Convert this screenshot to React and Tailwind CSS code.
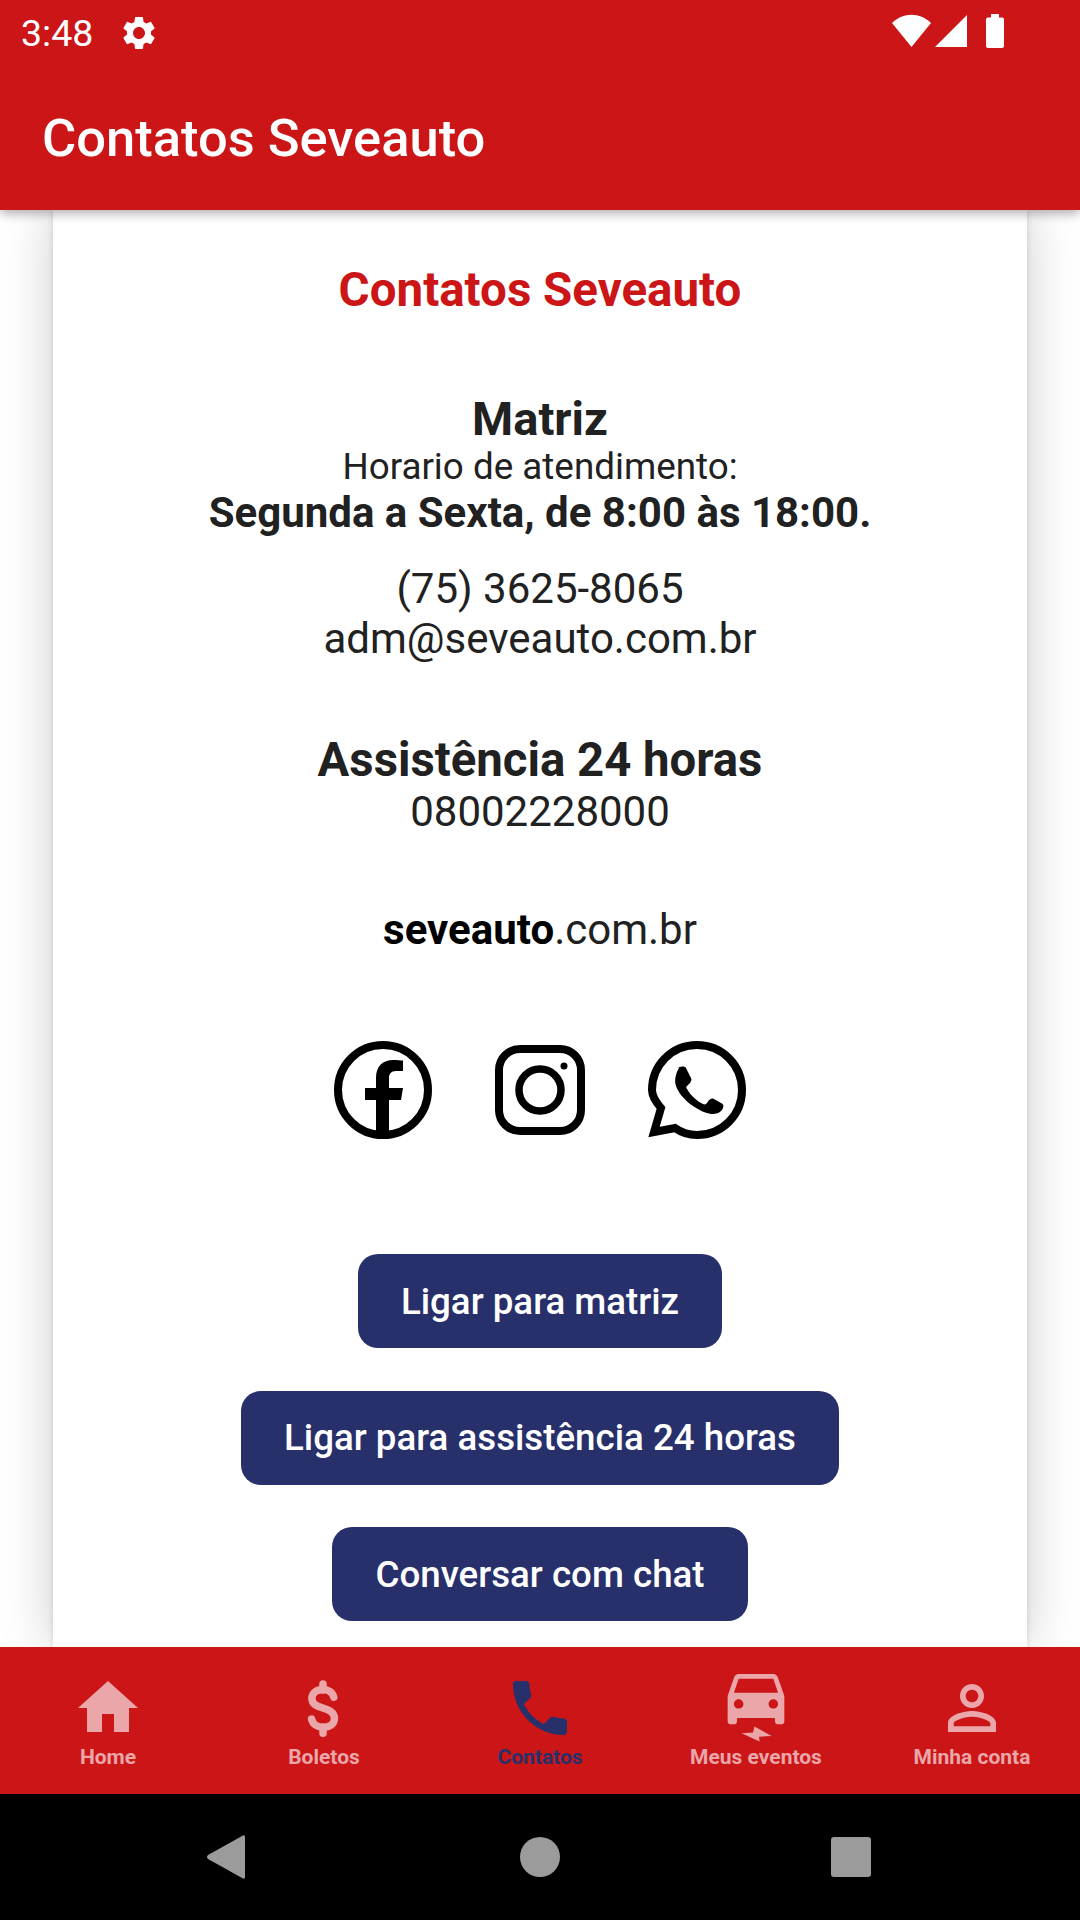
import React from 'react';

const font = { fontFamily: 'Roboto, sans-serif' };

const Home = () => (
  <svg viewBox="0 0 24 24" className="w-[72px] h-[72px]" fill="currentColor">
    <path d="M10 20v-6h4v6h5v-8h3L12 3 2 12h3v8z" />
  </svg>
);

const Dollar = () => (
  <svg viewBox="0 0 24 24" className="w-[72px] h-[72px] -ml-[3px]" fill="none" stroke="currentColor" strokeWidth="2.500" strokeLinecap="round">
    <path d="M12 4v2M12 18.400v2" />
    <path d="M15.600 8.400c-.4-1.600-1.800-2.600-3.600-2.600-2.100 0-3.700 1.200-3.700 3 0 4.100 7.500 2.300 7.500 6.700 0 1.800-1.600 2.900-3.800 2.900-2 0-3.400-1-3.800-2.700" />
  </svg>
);

const Phone = () => (
  <svg viewBox="0 0 24 24" className="w-[72px] h-[72px]" fill="currentColor">
    <path d="M6.62 10.79c1.44 2.83 3.76 5.14 6.59 6.59l2.2-2.2c.27-.27.67-.36 1.02-.24 1.12.37 2.33.57 3.57.57.55 0 1 .45 1 1V20c0 .55-.45 1-1 1-9.39 0-17-7.61-17-17 0-.55.45-1 1-1h3.5c.55 0 1 .45 1 1 0 1.25.2 2.45.57 3.57.11.35.03.74-.25 1.02l-2.2 2.2z" />
  </svg>
);

const Car = () => (
  <svg viewBox="0 0 24 24" className="w-[72px] h-[72px]" fill="currentColor">
    <g transform="translate(-0.6 -4.6) scale(1.05)">
      <path d="M18.92 6.01C18.72 5.42 18.16 5 17.5 5h-11c-.66 0-1.21.42-1.42 1.01L3 12v8c0 .55.45 1 1 1h1c.55 0 1-.45 1-1v-1h12v1c0 .55.45 1 1 1h1c.55 0 1-.45 1-1v-8l-2.08-5.99zM6.5 16c-.83 0-1.5-.67-1.5-1.5S5.67 13 6.5 13s1.5.67 1.5 1.5S7.33 16 6.5 16zm11 0c-.83 0-1.5-.67-1.5-1.5s.67-1.5 1.5-1.5 1.5.67 1.5 1.5-.67 1.5-1.5 1.5zM5 11l1.500-4.500h11L19 11H5z" />
    </g>
    <polygon points="11.5,18.2 11,20.2 7.2,20.4 13.2,23.2 13,21.6 17.2,21.3" />
  </svg>
);

const Person = () => (
  <svg viewBox="0 0 24 24" className="w-[72px] h-[72px]" fill="currentColor">
    <path d="M12 5.9c1.16 0 2.1.94 2.1 2.1s-.94 2.1-2.1 2.1S9.9 9.16 9.9 8s.94-2.1 2.1-2.1m0 9c2.97 0 6.1 1.46 6.1 2.1v1.1H5.9V17c0-.64 3.13-2.1 6.1-2.1M12 4C9.79 4 8 5.79 8 8s1.79 4 4 4 4-1.79 4-4-1.79-4-4-4zm0 9c-2.67 0-8 1.34-8 4v3h16v-3c0-2.66-5.33-4-8-4z" />
  </svg>
);

const Gear = () => (
  <svg viewBox="0 0 24 24" className="w-[40px] h-[40px]" fill="#fff">
    <path d="M19.14 12.94c.04-.3.06-.61.06-.94 0-.32-.02-.64-.07-.94l2.03-1.58c.18-.14.23-.41.12-.61l-1.92-3.32c-.12-.22-.37-.29-.59-.22l-2.39.96c-.5-.38-1.03-.7-1.62-.94l-.36-2.54c-.04-.24-.24-.41-.48-.41h-3.84c-.24 0-.43.17-.47.41l-.36 2.54c-.59.24-1.13.57-1.62.94l-2.39-.96c-.22-.08-.47 0-.59.22L2.74 8.87c-.12.21-.08.47.12.61l2.03 1.58c-.05.3-.09.63-.09.94s.02.64.07.94l-2.03 1.58c-.18.14-.23.41-.12.61l1.92 3.32c.12.22.37.29.59.22l2.39-.96c.5.38 1.03.7 1.62.94l.36 2.54c.05.24.24.41.48.41h3.84c.24 0 .44-.17.47-.41l.36-2.54c.59-.24 1.13-.56 1.62-.94l2.39.96c.22.08.47 0 .59-.22l1.92-3.32c.12-.22.07-.47-.12-.61l-2.01-1.58zM12 15.6c-1.98 0-3.6-1.62-3.6-3.6s1.62-3.6 3.6-3.6 3.6 1.62 3.6 3.6-1.62 3.6-3.6 3.6z" />
  </svg>
);

const StatusIcons = () => (
  <svg viewBox="0 0 114 36" className="w-[114px] h-[36px]" fill="#fff">
    <path d="M0 9C11-2 28-2 39 9L19.500 33z" />
    <polygon points="43,33 75,33 75,1" />
    <path d="M94 5.500a2 2 0 0 1 2-2h3V0h8v3.500h3a2 2 0 0 1 2 2V32a2 2 0 0 1-2 2H96a2 2 0 0 1-2-2z" />
  </svg>
);

const Facebook = () => (
  <svg viewBox="0 0 98 98" className="w-[98px] h-[98px]">
    <circle cx="49" cy="49" r="45" fill="none" stroke="#000" strokeWidth="8" />
    <path d="M42 96V59H31V47h11V37c0-12 7-18 17-18 4 0 8 .3 10 .6V30h-7c-5 0-7 3-7 7v10h14l-2 12H55v37z" fill="#000" />
  </svg>
);

const Instagram = () => (
  <svg viewBox="0 0 90 90" className="w-[90px] h-[90px]" fill="none" stroke="#000">
    <rect x="4" y="4" width="82" height="82" rx="21" strokeWidth="8" />
    <circle cx="45" cy="45" r="21" strokeWidth="7.500" />
    <circle cx="69" cy="21" r="3.500" fill="#000" stroke="none" />
  </svg>
);

const Whatsapp = () => (
  <svg viewBox="0 0 98 98" className="w-[98px] h-[98px]">
    <path d="M6 91l7-24C7 60 4 55 4 49 4 24 24 4 49 4s45 20 45 45-20 45-45 45c-7 0-15-2-22-7z" fill="none" stroke="#000" strokeWidth="8" strokeLinejoin="miter" />
    <path d="M30 27c3-2 7-2 8 0l5 10c1 2 0 3-1 5l-3 3c-1 1-1 2 0 3 4 7 10 12 16 15 2 1 3 0 4-1l2-3c2-1 3-2 5-1l7 4c2 1 3 2 2 5-1 3-5 6-10 6-5 0-11-2-20-8-9-6-15-14-17-20-2-6 0-13 3-18z" fill="#000" />
  </svg>
);

const tabs = [
  { label: 'Home', Icon: Home },
  { label: 'Boletos', Icon: Dollar },
  { label: 'Contatos', Icon: Phone, active: true },
  { label: 'Meus eventos', Icon: Car },
  { label: 'Minha conta', Icon: Person },
];

const buttons = ['Ligar para matriz', 'Ligar para assistência 24 horas', 'Conversar com chat'];

const App = () => {
  return (
    <div className="w-[1080px] h-[1920px] flex flex-col overflow-hidden bg-white" style={font}>
      {/* Header */}
      <header className="relative z-10 h-[210px] shrink-0 bg-[#cb1517] shadow-[0_4px_10px_rgba(0,0,0,0.3)] text-white">
        <div className="h-[63px] pl-[21px] pr-[74px] pt-[13px] flex items-start justify-between">
          <div className="flex items-center gap-[26px]">
            <span className="text-[37.5px] leading-[40px]">3:48</span>
            <Gear />
          </div>
          <div className="pt-px">
            <StatusIcons />
          </div>
        </div>
        <h1 className="pl-[42px] pt-[52px] text-[52.5px] leading-[46px] font-medium">Contatos Seveauto</h1>
      </header>

      {/* Card */}
      <main className="flex-1 min-h-0 px-[53px]">
        <div className="h-full bg-white shadow-[0_0_6px_rgba(0,0,0,0.12),0_0_50px_rgba(0,0,0,0.2)] flex flex-col items-center text-[#212121] pt-[55px]">
          <h2 className="text-[47.5px] leading-[50px] font-bold text-[#cb1517]">Contatos Seveauto</h2>

          <h3 className="mt-[76px] text-[47px] leading-[56px] font-bold">Matriz</h3>
          <p className="text-[36.8px] leading-[40px]">Horario de atendimento:</p>
          <p className="mt-[3px] text-[42px] leading-[46px] font-bold">Segunda a Sexta, de 8:00 às 18:00.</p>

          <p className="mt-[28px] text-[42px] leading-[50px]">(75) 3625-8065</p>
          <p className="text-[42px] leading-[50px]">adm@seveauto.com.br</p>

          <h3 className="mt-[70px] text-[47.3px] leading-[52px] font-bold">Assistência 24 horas</h3>
          <p className="mt-px text-[42px] leading-[50px]">08002228000</p>

          <p className="mt-[68px] text-[42px] leading-[50px]">
            <span className="font-bold text-black">seveauto</span>.com.br
          </p>

          {/* Social */}
          <div className="mt-[86px] flex items-center gap-[63px]">
            <Facebook />
            <Instagram />
            <Whatsapp />
          </div>

          {/* Actions */}
          <div className="mt-[115px] flex flex-col items-center gap-[42.5px]">
            {buttons.map((b) => (
              <button key={b} className="h-[94px] pt-px px-[43px] rounded-[20px] bg-[#28306b] text-white text-[36.7px] font-medium">
                {b}
              </button>
            ))}
          </div>
        </div>
      </main>

      {/* Bottom tabs */}
      <nav className="relative z-10 h-[147px] shrink-0 bg-[#cb1517] flex">
        {tabs.map(({ label, Icon, active }) => (
          <div key={label} className={`flex-1 flex flex-col items-center pt-[25px] ${active ? 'text-[#28306b]' : 'text-[#eba6a9]'}`}>
            <Icon />
            <span className="text-[21px] leading-[26px] font-bold">{label}</span>
          </div>
        ))}
      </nav>

      {/* Android navigation */}
      <div className="relative z-10 h-[126px] shrink-0 bg-black flex items-center justify-between pl-[207px] pr-[209px]">
        <svg viewBox="0 0 38 44" className="w-[38px] h-[44px] mr-[4px]" fill="#9b9b9b">
          <path d="M36 .5c1-.500 2 0 2 1.500v40c0 1.500-1 2-2 1.500L1 24c-1.300-1-1.300-3 0-4z" />
        </svg>
        <div className="w-[40px] h-[40px] rounded-full bg-[#9b9b9b]" />
        <div className="w-[40px] h-[40px] rounded-[3px] bg-[#9b9b9b]" />
      </div>
    </div>
  );
};

export default App;
